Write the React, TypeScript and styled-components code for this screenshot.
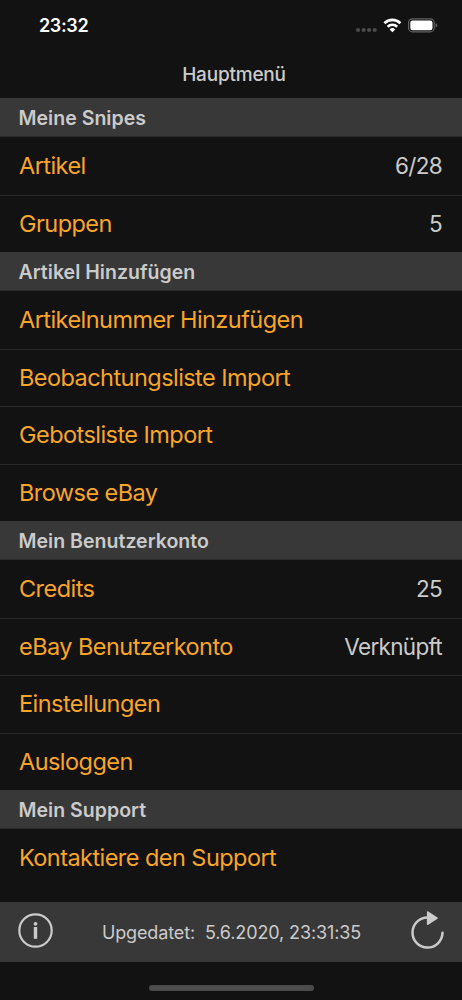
import React from "react";
import styled, { createGlobalStyle } from "styled-components";

const GlobalStyle = createGlobalStyle`
  * { box-sizing: border-box; }
  body { margin: 0; background: #121212; }
`;

const Screen = styled.div`
  width: 462px;
  height: 1000px;
  display: flex;
  flex-direction: column;
  overflow: hidden;
  background: #121212;
  color: #cbcbcb;
  font-family: Inter, "Liberation Sans", sans-serif;
`;

const StatusBar = styled.div`
  height: 50px;
  flex: none;
  display: flex;
  align-items: center;
  justify-content: space-between;
  padding: 0 24px 0 39px;
`;

const Clock = styled.span`
  padding-top: 1px;
  color: #fff;
  font-size: 18px;
  font-weight: 600;
  line-height: 22px;
  letter-spacing: -0.35px;
`;

const StatusIcons = styled.div`
  display: flex;
  align-items: center;
  height: 20px;
`;

const NavBar = styled.header`
  height: 48px;
  flex: none;
  display: flex;
  align-items: center;
  justify-content: center;
  padding: 2px 0 0 6px;
`;

const NavTitle = styled.h1`
  margin: 0;
  font-size: 19px;
  font-weight: 500;
  line-height: 24px;
  letter-spacing: -0.2px;
`;

const Menu = styled.main`
  height: 804px;
  flex: none;
`;

const SectionHeader = styled.h2`
  margin: 0;
  height: 39px;
  display: flex;
  align-items: center;
  padding: 2px 18.5px 0;
  background: #383838;
  border-bottom: 1px solid #2b2b2b;
  font-size: 19.5px;
  font-weight: 600;
  letter-spacing: 0.03px;
`;

const Rows = styled.div`
  & > * + * { border-top: 1px solid #2a2a2a; }
`;

const Row = styled.div`
  height: 57.5px;
  display: flex;
  align-items: center;
  justify-content: space-between;
  padding: 0 20px 0 19px;
  font-size: 23.5px;
  line-height: 28px;
`;

const Label = styled.span`
  color: #f9a529;
  white-space: nowrap;
  letter-spacing: -0.55px;
`;

const Value = styled.span`
  white-space: nowrap;
  font-size: 22.5px;
  letter-spacing: -0.7px;
`;

const Footer = styled.footer`
  height: 60px;
  flex: none;
  display: flex;
  align-items: center;
  justify-content: space-between;
  padding: 0 18px;
  background: #383838;
`;

const Updated = styled.span`
  padding-top: 2px;
  font-size: 18px;
  line-height: 24px;
  letter-spacing: -0.12px;
  white-space: pre;
`;

const IconButton = styled.button`
  display: flex;
  margin-bottom: 4px;
  padding: 0;
  border: 0;
  background: none;
  color: #cbcbcb;
`;

const HomeArea = styled.div`
  flex: 1;
  display: flex;
  justify-content: center;
  align-items: flex-start;
  padding-top: 23px;
`;

const HomeIndicator = styled.div`
  width: 165px;
  height: 6px;
  border-radius: 3px;
  background: #4c4c4c;
`;

type Item = { label: string; value?: string };

const sections: { title: string; items: Item[] }[] = [
  {
    title: "Meine Snipes",
    items: [
      { label: "Artikel", value: "6/28" },
      { label: "Gruppen", value: "5" },
    ],
  },
  {
    title: "Artikel Hinzufügen",
    items: [
      { label: "Artikelnummer Hinzufügen" },
      { label: "Beobachtungsliste Import" },
      { label: "Gebotsliste Import" },
      { label: "Browse eBay" },
    ],
  },
  {
    title: "Mein Benutzerkonto",
    items: [
      { label: "Credits", value: "25" },
      { label: "eBay Benutzerkonto", value: "Verknüpft" },
      { label: "Einstellungen" },
      { label: "Ausloggen" },
    ],
  },
  { title: "Mein Support", items: [{ label: "Kontaktiere den Support" }] },
];

const StatusGlyphs = () => (
  <svg width="84" height="20" viewBox="0 0 84 20">
    <g fill="#4b4b4b">
      <circle cx="4" cy="15" r="2.1" />
      <circle cx="9.6" cy="15" r="2.1" />
      <circle cx="15.1" cy="15" r="2.1" />
      <circle cx="20.7" cy="15" r="2.1" />
    </g>
    <g fill="none" stroke="#fff" strokeWidth="2.6">
      <path d="M30.4 8.2a11.4 11.4 0 0 1 16 0" />
      <path d="M33.6 11.7a6.9 6.9 0 0 1 9.6 0" />
    </g>
    <path d="M38.4 17.2l-2.8-2.8a4 4 0 0 1 5.6 0z" fill="#fff" />
    <rect x="54.6" y="3.9" width="25.6" height="12.9" rx="3.8" fill="none" stroke="#626262" strokeWidth="1.2" />
    <rect x="56.3" y="5.6" width="22.2" height="9.6" rx="2.2" fill="#fff" />
    <path d="M81.6 8.3v4.2c1.1-.4 1.7-1.1 1.7-2.1s-.6-1.7-1.7-2.1z" fill="#626262" />
  </svg>
);

const InfoIcon = () => (
  <svg width="35" height="35" viewBox="0 0 35 35">
    <circle cx="17.5" cy="17.5" r="16.2" fill="none" stroke="currentColor" strokeWidth="2.2" />
    <circle cx="17.5" cy="10.8" r="1.9" fill="currentColor" />
    <rect x="15.8" y="14" width="3.4" height="11.8" fill="currentColor" />
  </svg>
);

const RefreshIcon = () => (
  <svg width="34" height="40" viewBox="0 0 34 40">
    <path d="M17.5 7.5A15 15 0 1 0 32.5 22.8" fill="none" stroke="currentColor" strokeWidth="2.5" strokeLinecap="round" />
    <path d="M17.6 1.9v12.4l9.5-6.2z" fill="currentColor" stroke="currentColor" strokeWidth="1.4" strokeLinejoin="round" />
  </svg>
);

export default function App() {
  return (
    <Screen>
      <GlobalStyle />
      <StatusBar>
        <Clock>23:32</Clock>
        <StatusIcons><StatusGlyphs /></StatusIcons>
      </StatusBar>
      <NavBar><NavTitle>Hauptmenü</NavTitle></NavBar>
      <Menu>
        {sections.map((s) => (
          <section key={s.title}>
            <SectionHeader>{s.title}</SectionHeader>
            <Rows>
              {s.items.map((it) => (
                <Row key={it.label}>
                  <Label>{it.label}</Label>
                  {it.value && <Value>{it.value}</Value>}
                </Row>
              ))}
            </Rows>
          </section>
        ))}
      </Menu>
      <Footer>
        <IconButton aria-label="Info"><InfoIcon /></IconButton>
        <Updated>{"Upgedatet:  5.6.2020, 23:31:35"}</Updated>
        <IconButton aria-label="Aktualisieren"><RefreshIcon /></IconButton>
      </Footer>
      <HomeArea><HomeIndicator /></HomeArea>
    </Screen>
  );
}
